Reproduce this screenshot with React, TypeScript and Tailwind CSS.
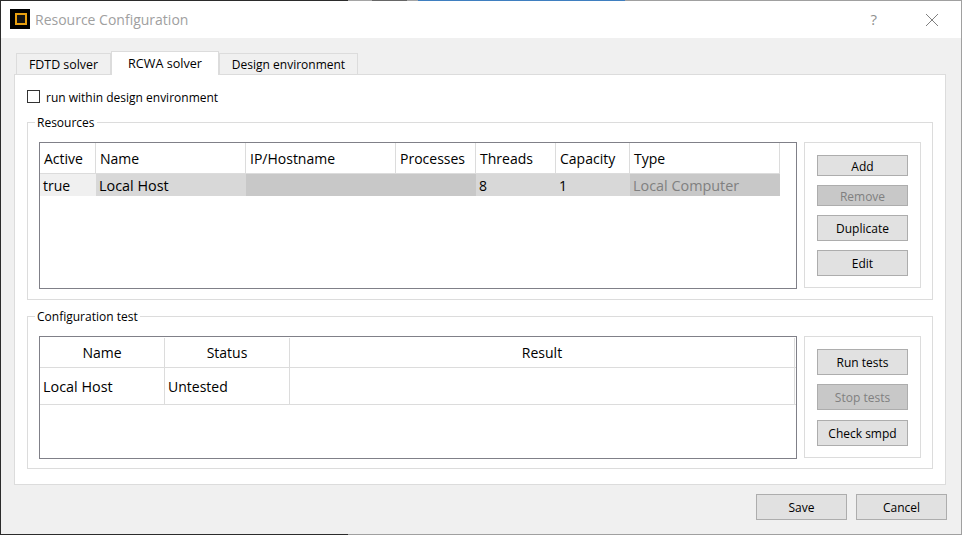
const font = "font-['Open_Sans','Noto_Sans',sans-serif]";

type BtnProps = { label: string; h: string; disabled?: boolean; mt?: string };

const Btn = ({ label, h, disabled, mt }: BtnProps) => (
  <div
    className={`flex w-[91px] items-center justify-center border border-[#adadad] text-[12px] ${h} ${mt ?? ''} ${
      h === 'h-[21px]' ? 'pt-[3px]' : 'pt-[1px]'
    } ${disabled ? 'bg-[#c8c8c8] text-[#808080]' : 'bg-[#e1e1e1] text-black'}`}
  >
    {label}
  </div>
);

const Group = ({ title, h, children }: { title: string; h: string; children: React.ReactNode }) => (
  <div className={`relative flex gap-[7px] border border-[#dcdcdc] pl-[11px] pt-[19px] ${h}`}>
    <span className="absolute left-[7px] top-[-8px] bg-white px-[2px] text-[12px] leading-[15px] text-black">{title}</span>
    {children}
  </div>
);

const ResCell = ({ w, text, bg, color }: { w: string; text?: string; bg: string; color?: string }) => (
  <div className={`h-full shrink-0 overflow-hidden whitespace-nowrap pl-[3px] leading-[24px] ${w} ${bg} ${color ?? 'text-black'}`}>{text}</div>
);

const ResHead = ({ w, text }: { w: string; text: string }) => (
  <div className={`flex h-full shrink-0 items-center border-r border-[#dcdcdc] pl-[4px] ${w}`}>{text}</div>
);

export default function App() {
  return (
    <div className={`flex h-[535px] w-[962px] flex-col overflow-hidden border-l border-r border-l-[#2b2b2b] border-r-[#a0a0a0] bg-[#f0f0f0] ${font}`}>
      {/* what shows of the desktop above the window */}
      <div className="flex h-[1px] shrink-0">
        <div className="w-[347px] bg-[#2b2b2b]" />
        <div className="w-[24px] bg-[#a5a5a5]" />
        <div className="w-[35px] bg-[#666666]" />
        <div className="w-[11px] bg-[#a5a5a5]" />
        <div className="w-[207px] bg-[#3f7fc0]" />
        <div className="flex-1 bg-[#a0a0a0]" />
      </div>

      <div className="flex h-[37px] shrink-0 items-center bg-white pl-[9px]">
        <div className="mb-[1px] flex h-[20px] w-[20px] items-center justify-center bg-black">
          <div className="ml-[1px] h-[12px] w-[12px] border-2 border-[#e8a010] bg-[#141414]" />
        </div>
        <span className="ml-[5px] text-[14px] text-[#a0a0a0]">Resource Configuration</span>
        <span className="ml-auto text-[15px] text-[#909090]">?</span>
        <svg className="ml-[48px] mr-[22px]" width="14" height="14" viewBox="0 0 14 14">
          <path d="M1 1 L13 13 M13 1 L1 13" stroke="#808080" strokeWidth="1" fill="none" />
        </svg>
      </div>

      <div className="flex h-[36px] shrink-0 items-end pl-[15px] text-[12px] text-black">
        <div className="flex h-[21px] w-[95px] items-center justify-center border border-b-0 border-[#dcdcdc] bg-[#f0f0f0] pt-[3px] text-[12.4px]">FDTD solver</div>
        <div className="z-10 mb-[-1px] flex h-[24px] w-[108px] items-center justify-center border border-b-0 border-[#dcdcdc] bg-white pt-[2px] text-[12.6px]">RCWA solver</div>
        <div className="flex h-[21px] w-[139px] items-center justify-center border border-b-0 border-[#dcdcdc] bg-[#f0f0f0] pt-[1px]">Design environment</div>
      </div>

      <div className="ml-[13px] flex h-[411px] w-[932px] shrink-0 flex-col border border-[#dcdcdc] bg-white px-[12px] text-black">
        <div className="mt-[15px] flex h-[13px] items-center text-[12px]">
          <div className="h-[13px] w-[13px] border border-[#333333] bg-white" />
          <span className="ml-[6px] pt-[2px]">run within design environment</span>
        </div>

        <div className="mt-[19px] flex flex-col gap-[16px]">
          <Group title="Resources" h="h-[178px]">
            <div className="flex h-[147px] w-[758px] shrink-0 flex-col border border-[#808088] text-[14px]">
              <div className="flex h-[31px] w-[740px] shrink-0 border-b border-[#dcdcdc]">
                <ResHead w="w-[56px]" text="Active" />
                <ResHead w="w-[150px]" text="Name" />
                <ResHead w="w-[150px]" text="IP/Hostname" />
                <ResHead w="w-[80px]" text="Processes" />
                <ResHead w="w-[80px]" text="Threads" />
                <ResHead w="w-[74px]" text="Capacity" />
                <ResHead w="w-[150px]" text="Type" />
              </div>
              <div className="flex h-[22px] shrink-0">
                <ResCell w="w-[56px]" text="true" bg="bg-[#f0f0f0]" />
                <ResCell w="w-[150px] text-[14.4px]" text="Local Host" bg="bg-[#d8d8d8]" />
                <ResCell w="w-[230px]" bg="bg-[#c8c8c8]" />
                <ResCell w="w-[80px]" text="8" bg="bg-[#d8d8d8]" />
                <ResCell w="w-[74px]" text="1" bg="bg-[#d8d8d8]" />
                <ResCell w="w-[150px] text-[14.4px]" text="Local Computer" bg="bg-[#c8c8c8]" color="text-[#808080]" />
              </div>
            </div>
            <div className="flex h-[146px] w-[117px] shrink-0 flex-col border border-[#dcdcdc] pl-[12px] pt-[12px]">
              <Btn label="Add" h="h-[21px]" />
              <Btn label="Remove" h="h-[21px]" mt="mt-[9px]" disabled />
              <Btn label="Duplicate" h="h-[26px]" mt="mt-[9px]" />
              <Btn label="Edit" h="h-[26px]" mt="mt-[9px]" />
            </div>
          </Group>

          <Group title="Configuration test" h="h-[153px]">
            <div className="flex h-[123px] w-[758px] shrink-0 flex-col border border-[#808088] text-[14px]">
              <div className="flex h-[31px] shrink-0 border-b border-[#dcdcdc] pr-[1px] pt-[1px]">
                <div className="flex w-[125px] items-center justify-center border-r border-[#dcdcdc]">Name</div>
                <div className="flex w-[125px] items-center justify-center border-r border-[#dcdcdc]">Status</div>
                <div className="flex flex-1 items-center justify-center border-r border-[#dcdcdc]">Result</div>
              </div>
              <div className="flex h-[37px] shrink-0 border-b border-[#dcdcdc] pr-[1px]">
                <div className="flex w-[125px] items-center border-r border-[#dcdcdc] pl-[3px] pt-[1px] text-[14.4px]">Local Host</div>
                <div className="flex w-[125px] items-center border-r border-[#dcdcdc] pl-[3px] pt-[1px]">Untested</div>
                <div className="flex-1 border-r border-[#dcdcdc]" />
              </div>
            </div>
            <div className="flex h-[122px] w-[117px] shrink-0 flex-col border border-[#dcdcdc] pl-[12px] pt-[12px]">
              <Btn label="Run tests" h="h-[26px]" />
              <Btn label="Stop tests" h="h-[26px]" mt="mt-[9px]" disabled />
              <Btn label="Check smpd" h="h-[26px]" mt="mt-[10px]" />
            </div>
          </Group>
        </div>
      </div>

      <div className="mr-[14px] mt-[9px] flex justify-end gap-[9px]">
        <Btn label="Save" h="h-[26px]" />
        <Btn label="Cancel" h="h-[26px]" />
      </div>

      <div className="mt-auto flex h-[1px] shrink-0">
        <div className="w-[347px] bg-[#2b2b2b]" />
        <div className="flex-1 bg-[#a0a0a0]" />
      </div>
    </div>
  );
}
